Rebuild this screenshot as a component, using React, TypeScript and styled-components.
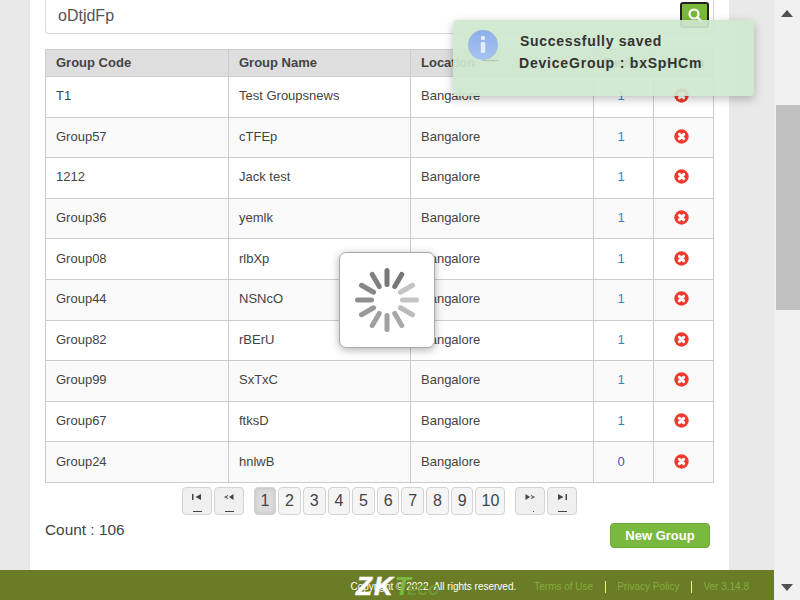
import styled, { createGlobalStyle } from "styled-components";

const GlobalStyle = createGlobalStyle`
  html, body {
    margin: 0;
    padding: 0;
    height: 600px;
    overflow: hidden;
    font-family: "Liberation Sans", Arial, sans-serif;
    color: #333;
  }
`;

const Page = styled.div`
  position: relative;
  display: flex;
  width: 800px;
  height: 600px;
  overflow: hidden;
  background: #e9e9e9;
`;

const Main = styled.div`
  display: flex;
  flex-direction: column;
  width: 774px;
  height: 600px;
`;

const Content = styled.div`
  flex: 1;
  min-height: 0;
  padding-left: 30px;
`;

const Panel = styled.div`
  width: 699px;
  height: 100%;
  box-sizing: border-box;
  padding: 0 15px;
  background: #fff;
`;

const SearchBar = styled.div`
  display: flex;
  align-items: flex-start;
  justify-content: space-between;
  width: 669px;
  height: 34px;
  box-sizing: border-box;
  border: 1px solid #d8d8d8;
  border-top: none;
  border-radius: 0 0 4px 4px;
  margin-bottom: 15px;
  padding: 2px 4px 0 12px;
  font-size: 16px;
  color: #555;
  line-height: 28px;
`;

const SearchButton = styled.div`
  display: flex;
  align-items: center;
  justify-content: center;
  width: 29px;
  height: 26px;
  box-sizing: border-box;
  border: 2px solid #222;
  border-radius: 3px;
  background: #7ab93b;
`;

const Table = styled.table`
  width: 668px;
  border-collapse: collapse;
  table-layout: fixed;
  font-size: 13px;
`;

const HeadCell = styled.th`
  height: 27px;
  padding: 0 10px 2px;
  box-sizing: border-box;
  border: 1px solid #ccc;
  background: #dedede;
  font-weight: 700;
  font-size: 13px;
  text-align: left;
  color: #444;
  white-space: nowrap;
  overflow: hidden;
`;

const Row = styled.tr<{ $striped: boolean }>`
  background: ${(p) => (p.$striped ? "#fafafa" : "#fff")};
`;

const Cell = styled.td`
  height: 40.6px;
  padding: 0 10px 2px;
  box-sizing: border-box;
  border: 1px solid #ccc;
  color: #444;
`;

const CountCell = styled(Cell)<{ $zero: boolean }>`
  padding: 0 5px 2px 0;
  text-align: center;
  color: ${(p) => (p.$zero ? "#3a5bb5" : "#2b87c9")};
`;

const ActionCell = styled(Cell)`
  padding: 0 5px 2px 0;
  text-align: center;
  line-height: 0;
`;

const Pager = styled.div`
  display: flex;
  justify-content: center;
  gap: 9.5px;
  width: 669px;
  margin-top: 4px;
`;

const PagerGroup = styled.div`
  display: flex;
  gap: 2px;
`;

const PageButton = styled.div<{ $active?: boolean }>`
  display: flex;
  align-items: center;
  justify-content: center;
  height: 28px;
  width: 22.67px;
  box-sizing: border-box;
  border: 1px solid #d3d3d3;
  border-radius: 4px;
  background: ${(p) => (p.$active ? "#dcdcdc" : "#f5f5f5")};
  box-shadow: ${(p) => (p.$active ? "inset 0 0 4px #bbb" : "none")};
  font-size: 16px;
  color: #444;
`;

const WideButton = styled(PageButton)`
  width: 30px;
`;

const NavButton = styled(PageButton)<{ $dot?: boolean }>`
  position: relative;
  width: 30px;
  background: #f0f0f0;
  padding-bottom: 8px;
  &::after {
    content: "";
    position: absolute;
    left: ${(p) => (p.$dot ? "17px" : "10px")};
    bottom: 2px;
    width: ${(p) => (p.$dot ? "1px" : "9px")};
    height: 1px;
    background: #444;
  }
`;

const Bottom = styled.div`
  display: flex;
  justify-content: space-between;
  align-items: flex-start;
  width: 669px;
  margin-top: 6px;
`;

const CountLabel = styled.div`
  font-size: 15.4px;
  color: #444;
`;

const NewButton = styled.div`
  display: flex;
  align-items: center;
  justify-content: center;
  width: 100px;
  height: 25px;
  box-sizing: border-box;
  margin: 2px 4px 0 0;
  border: 1px solid #6ea83a;
  border-radius: 4px;
  background: #7ab93f;
  color: #fff;
  font-size: 13px;
  font-weight: 700;
`;

const Footer = styled.div`
  position: relative;
  display: flex;
  align-items: center;
  justify-content: flex-end;
  height: 30px;
  box-sizing: border-box;
  padding: 3px 25px 0 0;
  background: #6b7c26;
  font-size: 10px;
`;

const Copyright = styled.div`
  color: #fff;
  margin-right: 6.5px;
`;

const FooterLink = styled.span`
  color: #82ad3c;
  padding: 0 11.5px;
  border-left: 1px solid #e6e6c8;
  line-height: 12px;
  &:first-of-type {
    border-left: none;
  }
  &:last-of-type {
    padding-right: 0;
  }
`;

const Logo = styled.div`
  position: absolute;
  left: 356px;
  top: 3px;
  display: flex;
  align-items: baseline;
  font-style: italic;
  font-weight: 700;
  line-height: 26px;
`;

const LogoMark = styled.span<{ $tail?: boolean }>`
  font-size: 26px;
  color: ${(p) => (p.$tail ? "#7ab93f" : "#fff")};
  letter-spacing: ${(p) => (p.$tail ? "0" : "2px")};
  -webkit-text-stroke: ${(p) => (p.$tail ? "0" : "0.6px #fff")};
`;

const LogoTail = styled.span`
  font-size: 14px;
  color: #6f9c33;
  letter-spacing: 0.5px;
  margin-left: -3px;
`;

const Scrollbar = styled.div`
  display: flex;
  flex-direction: column;
  align-items: center;
  width: 26px;
  height: 600px;
  background: #f1f1f1;
`;

const ArrowBox = styled.div`
  display: flex;
  align-items: center;
  justify-content: center;
  width: 100%;
  height: 26px;
`;

const Track = styled.div`
  flex: 1;
  width: 100%;
  padding-top: 79px;
`;

const Thumb = styled.div`
  width: 24px;
  height: 205px;
  margin-left: 2px;
  background: #c1c1c1;
`;

const Toast = styled.div`
  position: absolute;
  left: 453px;
  top: 20px;
  display: flex;
  width: 301px;
  height: 76px;
  border-radius: 4px;
  background: rgba(206, 231, 206, 0.92);
  box-shadow: 0 3px 10px rgba(0, 0, 0, 0.25);
  color: #222;
`;

const ToastIcon = styled.div`
  display: flex;
  padding: 10px 0 0 15px;
`;

const ToastText = styled.div`
  margin-left: 20px;
  padding-top: 10px;
  font-size: 14px;
  font-weight: 700;
  line-height: 22px;
  letter-spacing: 0.72px;
  white-space: nowrap;
  color: #333;
`;

const ToastLine = styled.div<{ $shift?: boolean }>`
  margin-left: ${(p) => (p.$shift ? "-1px" : "0")};
  letter-spacing: ${(p) => (p.$shift ? "0.8px" : "0.72px")};
`;

const Spinner = styled.div`
  position: absolute;
  left: 339px;
  top: 252px;
  display: flex;
  align-items: center;
  justify-content: center;
  width: 96px;
  height: 96px;
  box-sizing: border-box;
  border: 1px solid #aaa;
  border-radius: 7px;
  background: #fff;
  box-shadow: 0 2px 8px rgba(0, 0, 0, 0.3);
`;

const rows = [
  ["T1", "Test Groupsnews", 1],
  ["Group57", "cTFEp", 1],
  ["1212", "Jack test", 1],
  ["Group36", "yemlk", 1],
  ["Group08", "rlbXp", 1],
  ["Group44", "NSNcO", 1],
  ["Group82", "rBErU", 1],
  ["Group99", "SxTxC", 1],
  ["Group67", "ftksD", 1],
  ["Group24", "hnlwB", 0],
] as const;

const spinnerShades = [
  "#777", "#777", "#c4c4c4", "#c4c4c4", "#bbb", "#a8a8a8",
  "#a0a0a0", "#a0a0a0", "#999", "#909090", "#888", "#808080",
];

const navIcons = {
  first: "M0 0h1.5v6H0zM9 0v6L3.5 3z",
  prev: "M9.5 0v6L5 3zM4 1v1L2 3l2 1v1L0 3z",
  next: "M0.5 0v6L5 3zM6 1v1l2 1-2 1v1l4-2z",
  last: "M1 0v6l5.5-3zM8.5 0H10v6H8.5z",
};

const NavIcon = ({ d }: { d: string }) => (
  <svg width="10" height="6" viewBox="0 0 10 6">
    <path d={d} fill="#444" />
  </svg>
);

const DeleteIcon = () => (
  <svg width="15" height="15" viewBox="0 0 15 15">
    <circle cx="7.5" cy="7.5" r="7.2" fill="#f0392f" />
    <path d="M5.4 5.4l4.2 4.2M9.6 5.4l-4.2 4.2" stroke="#fff" strokeWidth="3" strokeLinecap="round" />
  </svg>
);

export default function App() {
  return (
    <Page>
      <GlobalStyle />
      <Main>
        <Content>
          <Panel>
            <SearchBar>
              oDtjdFp
              <SearchButton>
                <svg width="16" height="16" viewBox="0 0 16 16">
                  <circle cx="7" cy="7" r="4.5" fill="none" stroke="#fff" strokeWidth="2.2" />
                  <path d="M10.5 10.5L14 14" stroke="#fff" strokeWidth="2.6" strokeLinecap="round" />
                </svg>
              </SearchButton>
            </SearchBar>
            <Table>
              <colgroup>
                <col width="183" />
                <col width="182" />
                <col width="183" />
                <col width="60" />
                <col width="60" />
              </colgroup>
              <thead>
                <tr>
                  <HeadCell>Group Code</HeadCell>
                  <HeadCell>Group Name</HeadCell>
                  <HeadCell>Location</HeadCell>
                  <HeadCell>Device</HeadCell>
                  <HeadCell>Action</HeadCell>
                </tr>
              </thead>
              <tbody>
                {rows.map(([code, name, count], index) => (
                  <Row key={code} $striped={index % 2 === 1}>
                    <Cell>{code}</Cell>
                    <Cell>{name}</Cell>
                    <Cell>Bangalore</Cell>
                    <CountCell $zero={count === 0}>{count}</CountCell>
                    <ActionCell>
                      <DeleteIcon />
                    </ActionCell>
                  </Row>
                ))}
              </tbody>
            </Table>
            <Pager>
              <PagerGroup>
                <NavButton>
                  <NavIcon d={navIcons.first} />
                </NavButton>
                <NavButton>
                  <NavIcon d={navIcons.prev} />
                </NavButton>
              </PagerGroup>
              <PagerGroup>
                <PageButton $active>1</PageButton>
                {[2, 3, 4, 5, 6, 7, 8, 9].map((n) => (
                  <PageButton key={n}>{n}</PageButton>
                ))}
                <WideButton>10</WideButton>
              </PagerGroup>
              <PagerGroup>
                <NavButton $dot>
                  <NavIcon d={navIcons.next} />
                </NavButton>
                <NavButton>
                  <NavIcon d={navIcons.last} />
                </NavButton>
              </PagerGroup>
            </Pager>
            <Bottom>
              <CountLabel>Count : 106</CountLabel>
              <NewButton>New Group</NewButton>
            </Bottom>
          </Panel>
        </Content>
        <Footer>
          <Copyright>Copyright © 2022. All rights reserved.</Copyright>
          <FooterLink>Terms of Use</FooterLink>
          <FooterLink>Privacy Policy</FooterLink>
          <FooterLink>Ver 3.14.8</FooterLink>
          <Logo>
            <LogoMark>ZK</LogoMark>
            <LogoMark $tail>T</LogoMark>
            <LogoTail>ECO</LogoTail>
          </Logo>
        </Footer>
      </Main>
      <Scrollbar>
        <ArrowBox>
          <svg width="12" height="7" viewBox="0 0 12 7">
            <path d="M0 7L6 0l6 7z" fill="#505050" />
          </svg>
        </ArrowBox>
        <Track>
          <Thumb />
        </Track>
        <ArrowBox>
          <svg width="12" height="7" viewBox="0 0 12 7">
            <path d="M0 0l6 7 6-7z" fill="#505050" />
          </svg>
        </ArrowBox>
      </Scrollbar>
      <Toast>
        <ToastIcon>
          <svg width="32" height="36" viewBox="0 0 32 36">
            <defs>
              <linearGradient id="infoFill" x1="0" y1="0" x2="0" y2="1">
                <stop offset="0" stopColor="#8fb0ea" />
                <stop offset="1" stopColor="#a5c3f0" />
              </linearGradient>
            </defs>
            <ellipse cx="22" cy="30.5" rx="9" ry="0.8" fill="#b4c9b4" />
            <circle cx="15" cy="15" r="15" fill="url(#infoFill)" />
            <circle cx="15" cy="8" r="2.2" fill="#e6eefc" />
            <rect x="12.8" y="12" width="4.4" height="11" rx="1" fill="#e6eefc" />
          </svg>
        </ToastIcon>
        <ToastText>
          <ToastLine>Successfully saved</ToastLine>
          <ToastLine $shift>DeviceGroup : bxSpHCm</ToastLine>
        </ToastText>
      </Toast>
      <Spinner>
        <svg width="66" height="66" viewBox="0 0 66 66">
          {spinnerShades.map((shade, index) => (
            <rect
              key={index}
              x="30.5"
              y="1"
              width="5"
              height="19"
              rx="2.5"
              fill={shade}
              transform={`rotate(${index * 30} 33 33)`}
            />
          ))}
        </svg>
      </Spinner>
    </Page>
  );
}
